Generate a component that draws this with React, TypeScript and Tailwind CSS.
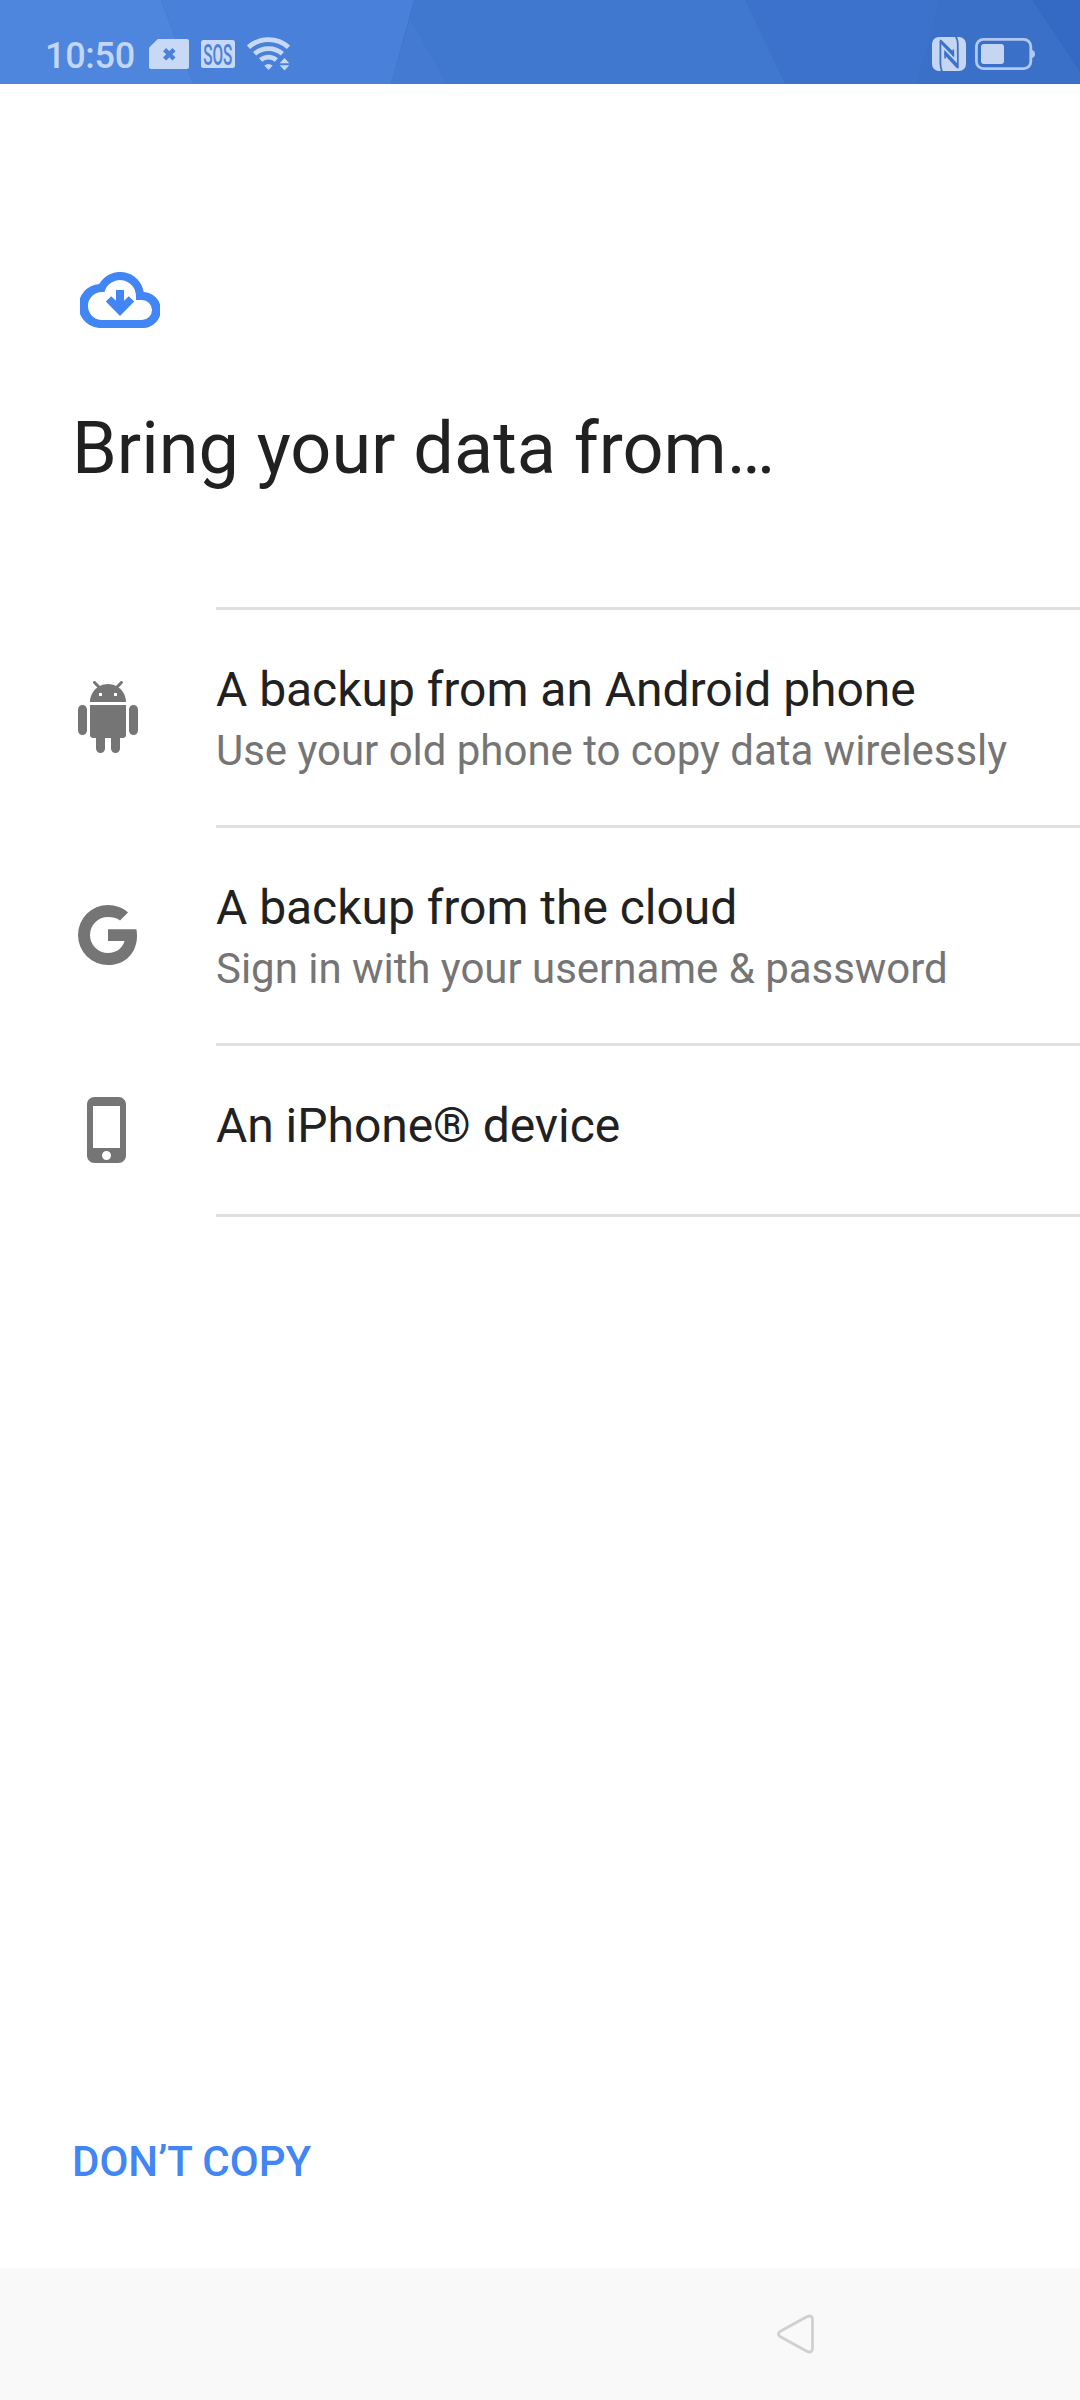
import type { ReactNode } from "react";

type Option = {
  id: string;
  title: string;
  detail?: string;
  icon: ReactNode;
};

function StatusBackdrop() {
  return (
    <svg className="absolute inset-0" width="1080" height="84" viewBox="0 0 1080 84" aria-hidden="true">
      <rect width="1080" height="84" fill="#3c72cb" />
      <path d="M0 0H161L193 84H0z" fill="#4e85dd" />
      <path d="M161 0H414L391 84H193z" fill="#4980d9" />
      <path d="M410 18L447 84H391z" fill="#447ad2" />
      <path d="M414 0H745L785 84H447L410 18z" fill="#4077cf" />
      <path d="M939 0H1032L1080 72V84H917z" fill="#3b70c9" />
      <path d="M1032 0H1080V72z" fill="#346ac3" />
    </svg>
  );
}

function SimIcon() {
  return (
    <svg width="40" height="30" viewBox="0 0 40 30" aria-hidden="true">
      <path d="M9.5 0H38a2 2 0 0 1 2 2V28a2 2 0 0 1-2 2H2a2 2 0 0 1-2-2V9.5a2 2 0 0 1 .7-1.5L8 .7A2 2 0 0 1 9.5 0z" fill="#c8d9f5" />
      <path d="M15.6 10.6L25 20M25 10.6L15.6 20" stroke="#4b81d9" strokeWidth="4.4" />
    </svg>
  );
}

function SosIcon() {
  return (
    <svg className="overflow-visible" width="34" height="28" viewBox="0 0 34 28" aria-hidden="true">
      <rect width="34" height="28" rx="2.5" fill="#c8d9f5" />
      <text
        transform="translate(2.3 25) scale(0.51 1)"
        fontFamily="Roboto, sans-serif"
        fontSize="30"
        fontWeight="500"
        fill="#4b81d9"
      >
        SOS
      </text>
    </svg>
  );
}

function WifiIcon() {
  return (
    <svg width="44" height="34" viewBox="0 0 44 34" aria-hidden="true">
      <g fill="none" stroke="#c8d9f5" strokeWidth="4.8">
        <path d="M1.5 10.2a30 30 0 0 1 40 0" />
        <path d="M7.6 16.8a21 21 0 0 1 27.8 0" />
        <path d="M13.6 23a12 12 0 0 1 15.8 0" />
      </g>
      <path d="M17.3 28.6q4.2-3 8.4 0L21.5 33z" fill="#c8d9f5" />
      <path d="M37.5 21l4.8 5.2h-9.6zM37.5 33.4l4.8-5.2h-9.6z" fill="#c8d9f5" />
    </svg>
  );
}

function NfcIcon() {
  return (
    <svg width="34" height="34" viewBox="0 0 34 34" aria-hidden="true">
      <rect width="34" height="34" rx="7" fill="#c6d6f0" />
      <g fill="none" stroke="#3d72ca" strokeWidth="1.8">
        <path d="M10.6 35.5C8.4 32 8.4 30 8.4 26V4" />
        <path d="M23.2 -1.5C25.8 2 25.8 4 25.8 8V30.5" />
        <path d="M21.3 19V12.5M13.1 15V21.5" strokeWidth="1.6" />
      </g>
      <path d="M7.5 2.6L9.5 3L22.1 15.6V20.6L8.6 6.5z" fill="#3d72ca" />
      <path d="M12.3 12.8L25.8 27L26.7 31.6L24.8 31.2L12.3 17.8z" fill="#3d72ca" />
    </svg>
  );
}

function BatteryIcon() {
  return (
    <svg width="60" height="32" viewBox="0 0 60 32" aria-hidden="true">
      <rect x="1.4" y="1.4" width="54.4" height="29.2" rx="7" fill="none" stroke="#b1c9f0" strokeWidth="2.8" />
      <path d="M57 12c2 .6 3 2 3 4s-1 3.4-3 4z" fill="#b1c9f0" />
      <rect x="6" y="6" width="23" height="20" rx="3" fill="#c6d6f0" />
    </svg>
  );
}

function CloudDownloadIcon() {
  return (
    <svg width="80" height="56" viewBox="0 0 20 14" fill="#4285f4" aria-hidden="true">
      <path
        fillRule="evenodd"
        d="M15.92 5A6 6 0 0 0 4.8 3A5.5 5.5 0 0 0 5.5 14H15.5A4.5 4.5 0 0 0 15.92 5zM15.5 12H5.5A3.5 3.5 0 0 1 5.5 5H6.13A4 4 0 0 1 14 6V7H15.5A2.5 2.5 0 0 1 15.5 12z"
      />
      <path d="M9 4.5h2v2.7l1.2-1.15 1.35 1.35L10 11 6.45 7.4 7.8 6.05 9 7.2z" />
    </svg>
  );
}

function AndroidIcon() {
  return (
    <svg width="72" height="72" viewBox="0 0 24 24" fill="#757575" aria-hidden="true">
      <path d="M6 18c0 .55.45 1 1 1h1v3.5c0 .83.67 1.5 1.5 1.5s1.5-.67 1.5-1.5V19h2v3.5c0 .83.67 1.5 1.5 1.5s1.5-.67 1.5-1.5V19h1c.55 0 1-.45 1-1V8H6v10zM3.5 8C2.67 8 2 8.67 2 9.5v7c0 .83.67 1.5 1.5 1.5S5 17.33 5 16.5v-7C5 8.67 4.33 8 3.5 8zm17 0c-.83 0-1.5.67-1.5 1.5v7c0 .83.67 1.5 1.5 1.5s1.5-.67 1.5-1.5v-7c0-.83-.67-1.5-1.5-1.5zm-4.97-5.84l1.3-1.3c.2-.2.2-.51 0-.71-.2-.2-.51-.2-.71 0l-1.48 1.48C13.85 1.23 12.95 1 12 1c-.96 0-1.86.23-2.66.63L7.85.15c-.2-.2-.51-.2-.71 0-.2.2-.2.51 0 .71l1.31 1.31C6.97 3.26 6 5.01 6 7h12c0-1.99-.97-3.75-2.47-4.84zM10 5H9V4h1v1zm5 0h-1V4h1v1z" />
    </svg>
  );
}

function GoogleIcon() {
  return (
    <svg width="72" height="72" viewBox="-36 -36 72 72" fill="#757575" aria-hidden="true">
      <path d="M0-5.8V6H16.6C14.5 13 8.8 18 0 18A18 18 0 0 1 0-18C4.6-18 8.8-17.2 12-14.5L20-22.5C15-27.2 7.6-30 0-30A30 30 0 0 0 0 30C17.3 30 29 17.9 29 .7C29-1.4 28.8-3.8 28.4-5.8z" />
    </svg>
  );
}

function PhoneIcon() {
  return (
    <svg width="72" height="72" viewBox="0 0 24 24" fill="#757575" aria-hidden="true">
      <path d="M15.5 1h-8C6.12 1 5 2.12 5 3.5v17C5 21.88 6.12 23 7.5 23h8c1.38 0 2.5-1.12 2.5-2.5v-17C18 2.12 16.88 1 15.5 1zm-4 21c-.83 0-1.5-.67-1.5-1.5s.67-1.5 1.5-1.5 1.5.67 1.5 1.5-.67 1.5-1.5 1.5zm4.5-4H7V4h9v14z" />
    </svg>
  );
}

const OPTIONS: Option[] = [
  {
    id: "android",
    title: "A backup from an Android phone",
    detail: "Use your old phone to copy data wirelessly",
    icon: <AndroidIcon />,
  },
  {
    id: "cloud",
    title: "A backup from the cloud",
    detail: "Sign in with your username & password",
    icon: <GoogleIcon />,
  },
  {
    id: "iphone",
    title: "An iPhone® device",
    icon: <PhoneIcon />,
  },
];

function StatusBar() {
  return (
    <header className="relative h-[84px] shrink-0">
      <StatusBackdrop />
      <div className="relative flex h-full items-start justify-between pl-[45px] pr-[45px]">
        <div className="flex items-start">
          <span className="mt-[35px] w-[104px] text-[36px] leading-[42px] font-medium tracking-[-0.3px] text-[#c3d6f5]">10:50</span>
          <div className="mt-[39px]">
            <SimIcon />
          </div>
          <div className="mt-[40px] ml-[12px]">
            <SosIcon />
          </div>
          <div className="mt-[37px] ml-[12px]">
            <WifiIcon />
          </div>
        </div>
        <div className="mt-[37px] flex items-center gap-[9px]">
          <NfcIcon />
          <BatteryIcon />
        </div>
      </div>
    </header>
  );
}

function OptionRow({ option }: { option: Option }) {
  return (
    <button className="flex w-full text-left">
      <span className={option.detail ? "w-[216px] shrink-0 pt-[71px] pl-[72px]" : "w-[216px] shrink-0 pt-[48px] pl-[72px]"}>
        {option.icon}
      </span>
      <span
        className={
          option.detail
            ? "flex h-[218px] grow flex-col border-b-3 border-[#e0e0e0] pt-[52px]"
            : "flex h-[171px] grow flex-col border-b-3 border-[#e0e0e0] pt-[52px]"
        }
      >
        <span className="text-[48px] leading-[56px] tracking-[-0.04px] whitespace-nowrap text-[#212121]">{option.title}</span>
        {option.detail && (
          <span className="mt-[8px] text-[42px] leading-[50px] tracking-[-0.03px] whitespace-nowrap text-[#757575]">{option.detail}</span>
        )}
      </span>
    </button>
  );
}

export default function App() {
  return (
    <div className="flex h-[2400px] w-[1080px] flex-col overflow-hidden bg-white font-[Roboto,sans-serif]">
      <StatusBar />

      <main className="flex grow flex-col">
        <div className="pt-[188px] pl-[80px]">
          <CloudDownloadIcon />
        </div>
        <h1 className="mt-[79px] pl-[72px] text-[72px] leading-[84px] text-[#212121]">Bring your data from…</h1>

        <div className="mt-[116px]">
          <div className="ml-[216px] h-[3px] bg-[#e0e0e0]" />
          {OPTIONS.map((option) => (
            <OptionRow key={option.id} option={option} />
          ))}
        </div>

        <div className="mt-auto pb-[81px] pl-[72px]">
          <button className="block text-[42px] leading-[50px] font-medium text-[#4285f4]">DON’T COPY</button>
        </div>
      </main>

      <nav className="flex h-[132px] shrink-0 items-start bg-[#f9f9f9] pt-[45px] pl-[776px]">
        <svg width="40" height="42" viewBox="0 0 40 42" aria-hidden="true">
          <path
            d="M31.2 3.6L4.4 18.2Q.4 21 4.4 23.8L31.2 38.4Q36.3 40.4 36.5 35.6V6.4Q36.3 1.6 31.2 3.6z"
            fill="none"
            stroke="#d0d0d0"
            strokeWidth="2.8"
            strokeLinejoin="round"
          />
        </svg>
      </nav>
    </div>
  );
}
